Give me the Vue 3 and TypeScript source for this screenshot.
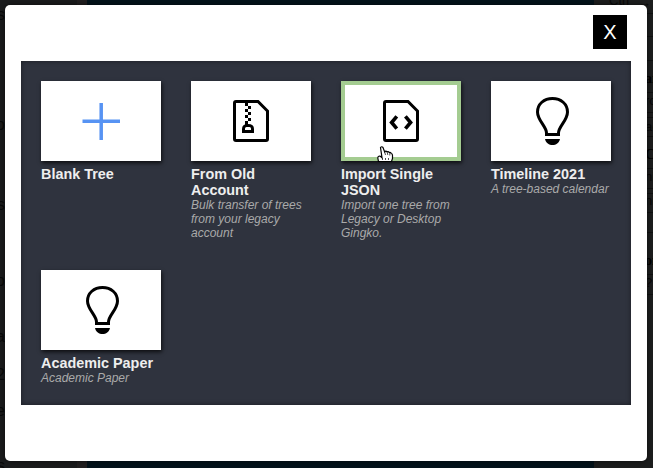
<script setup lang="ts">
interface Template {
  title: string
  description?: string
  icon: 'plus' | 'zip' | 'code' | 'bulb'
  hovered?: boolean
}

const templates: Template[] = [
  { title: 'Blank Tree', icon: 'plus' },
  { title: 'From Old Account', description: 'Bulk transfer of trees from your legacy account', icon: 'zip' },
  { title: 'Import Single JSON', description: 'Import one tree from Legacy or Desktop Gingko.', icon: 'code', hovered: true },
  { title: 'Timeline 2021', description: 'A tree-based calendar', icon: 'bulb' },
  { title: 'Academic Paper', description: 'Academic Paper', icon: 'bulb' },
]

// Parts of the document view which stay visible around the modal
const leftText = [
  { text: 's', y: 5 }, { text: 'o', y: 115 }, { text: 's', y: 195 }, { text: 'o', y: 271 },
  { text: 'a', y: 327 }, { text: '2', y: 365 }, { text: 're', y: 401 }, { text: 's', y: 456 },
]
const rightText = [
  { text: 'ar', y: 69, bold: true }, { text: 'ro', y: 91 }, { text: 'ac', y: 117 },
  { text: 'Ca', y: 145, bold: true }, { text: 'ni', y: 167 }, { text: 'ni', y: 191 },
  { text: 'on', y: 251, bold: true }, { text: '?', y: 273 },
]
const rules = [13, 36, 60, 92, 112, 117, 136, 168, 188, 193, 212, 232, 274, 294]
</script>

<template>
  <div class="screen">
    <div class="backdrop">
      <div class="side"></div>
      <div class="gutter"></div>
      <div class="document"></div>
      <div class="help"></div>
      <span v-for="t in leftText" :key="'l' + t.y" class="left-text" :style="{ top: t.y + 'px' }">{{ t.text }}</span>
      <i v-for="y in rules" :key="'r' + y" class="rule" :style="{ top: y + 'px' }"></i>
      <span v-for="t in rightText" :key="'t' + t.y" class="right-text" :class="{ bold: t.bold }" :style="{ top: t.y + 'px' }">{{ t.text }}</span>
      <span class="key">Ctrl</span>
      <span class="key arrow">→</span>
    </div>
    <div class="modal">
      <header><button class="close">X</button></header>
      <main class="templates">
        <div v-for="t in templates" :key="t.title" class="item">
          <div class="thumb" :class="{ hovered: t.hovered }">
            <svg v-if="t.icon === 'plus'" width="38" height="38" viewBox="0 0 38 38">
              <path d="M.5 19.3H38M19.2 1V38" fill="none" stroke="#5793f3" stroke-width="3.5" />
            </svg>
            <svg v-else-if="t.icon === 'zip'" width="36" height="42" viewBox="0 0 36 42">
              <path d="M3 1.5H25L34.5 11V39Q34.5 40.5 33 40.5H3Q1.5 40.5 1.5 39V3Q1.5 1.5 3 1.5Z" fill="none" stroke="#000" stroke-width="3" />
              <path d="M12 3h3v3h-3zM15 6h3v3h-3zM12 9h3v3h-3zM15 12h3v3h-3zM12 15h3v3h-3zM15 18h3v3h-3zM12 21h3v4h-3z" shape-rendering="crispEdges" />
              <path d="M9 33V29Q9 24 15 24Q21 24 21 29V33ZM12 30H18V28.5Q18 27 16.5 27H13.5Q12 27 12 28.5Z" fill-rule="evenodd" />
            </svg>
            <svg v-else-if="t.icon === 'code'" width="36" height="42" viewBox="0 0 36 42">
              <path d="M3 1.5H25L34.5 11V39Q34.5 40.5 33 40.5H3Q1.5 40.5 1.5 39V3Q1.5 1.5 3 1.5Z" fill="none" stroke="#000" stroke-width="3" />
              <path d="M13.8 16.3L8.6 22.5L13.8 28.7M22.4 16.3L27.6 22.5L22.4 28.7" fill="none" stroke="#000" stroke-width="3.6" />
            </svg>
            <svg v-else class="bulb" width="33" height="48" viewBox="0 0 33 48">
              <path d="M10.5 37.5V36C10.5 29.5 1.5 23.5 1.5 15C1.5 7 8 1.5 16.5 1.5S31.5 7 31.5 15C31.5 23.5 22.5 29.5 22.5 36V37.5Z" fill="none" stroke="#000" stroke-width="3" />
              <path d="M9 42H24C23 46 20 48 16.5 48S10 46 9 42Z" />
            </svg>
            <svg v-if="t.hovered" class="cursor" width="17" height="16" viewBox="0 0 17 16">
              <path d="M3.5 1.5Q4.7 0 6 1.5L7.7 6Q8.8 4.5 10 5.8Q11.3 5 12.3 6.5Q13.8 6 14.3 7.5Q15.5 7.8 15.5 9.5V12.5L14.5 15.5H1.5L.8 12Q1 9.8 3 10L5 11.7Z" fill="#fff" stroke="#000" stroke-width="1.2" />
              <path d="M7.7 6L8.5 9M10.2 6L10.8 9M12.8 7V9.5M5.5 12V14M8.5 12V14M11.5 12V14" fill="none" stroke="#222" stroke-width=".8" />
            </svg>
          </div>
          <h3>{{ t.title }}</h3>
          <p v-if="t.description">{{ t.description }}</p>
        </div>
      </main>
    </div>
  </div>
</template>

<style>
body { overflow: hidden; }
</style>

<style scoped>
.screen {
  position: relative;
  box-sizing: border-box;
  width: 653px;
  height: 468px;
  padding: 5px 6px 7px 5px;
  overflow: hidden;
  font-family: "Liberation Sans", Arial, sans-serif;
}
.backdrop {
  position: absolute;
  inset: 0;
  display: grid;
  grid-template-columns: 77px 10px 507px 1fr;
  overflow: hidden;
}
.side { background: #1a1b1c; }
.gutter { background: #211f20; }
.document { background: #03121a; }
.help { background: #1c1d1d; }
.left-text, .right-text, .key, .rule { position: absolute; }
.left-text { right: 648px; font-size: 16px; line-height: 20px; color: #080909; }
.right-text { left: 645px; font-size: 13px; line-height: 20px; color: #080808; }
.right-text.bold { font: bold 14px/20px "Liberation Serif", serif; color: #000; }
.rule { left: 595px; right: 0; height: 1px; background: #101111; }
.key { left: 609px; top: -7px; font-size: 13px; line-height: 16px; color: #080808; }
.key.arrow { left: 638px; top: -5px; }
.modal {
  position: relative;
  box-sizing: border-box;
  height: 456px;
  padding: 10px 16px;
  border-radius: 5px;
  background: #fff;
  box-shadow: 0 0 5px rgba(0, 0, 0, .55);
}
header {
  display: flex;
  justify-content: flex-end;
  height: 46px;
  padding-right: 4px;
}
.close {
  width: 34px;
  height: 34px;
  padding: 0;
  border: 0;
  background: #000;
  color: #fff;
  font: 20px/34px "Liberation Sans", Arial, sans-serif;
}
.templates {
  display: grid;
  box-sizing: border-box;
  grid-template-columns: repeat(4, 120px);
  grid-template-rows: 159px auto;
  gap: 30px;
  height: 344px;
  padding: 20px;
  background: #2f333e;
  box-shadow: inset 0 0 5px rgba(0, 0, 0, .45);
}
.thumb {
  position: relative;
  display: flex;
  align-items: center;
  justify-content: center;
  box-sizing: border-box;
  width: 120px;
  height: 80px;
  margin-bottom: 5px;
  background: #fff;
  box-shadow: 1px 2px 4px rgba(0, 0, 0, .75);
}
.thumb.hovered { border: 4px solid #a4cc91; }
.thumb svg { display: block; }
.thumb .bulb { margin-left: 3px; }
.thumb .cursor {
  position: absolute;
  left: 32px;
  bottom: -5px;
}
h3 {
  margin: 0;
  color: #eee;
  font-size: 14.4px;
  line-height: 16px;
}
p {
  margin: 0;
  color: #aaa;
  font-size: 12px;
  font-style: italic;
  line-height: 14px;
}
</style>
